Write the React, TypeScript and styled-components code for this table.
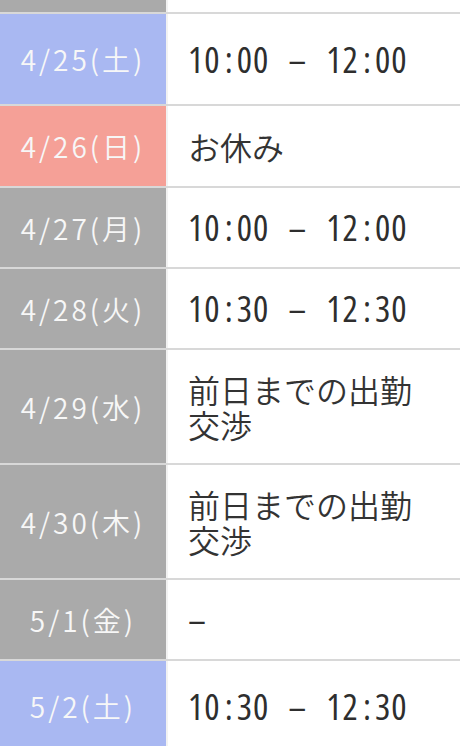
import styled, { createGlobalStyle } from 'styled-components';

const GlobalStyle = createGlobalStyle`
  html, body {
    margin: 0;
    padding: 0;
    background: #ffffff;
  }
  body {
    font-family: "Noto Sans CJK JP", "Noto Sans", sans-serif;
  }
`;

type Kind = 'weekday' | 'sat' | 'sun';

const dayColors: Record<Kind, string> = {
  weekday: '#aaaaaa',
  sat: '#a9b8f2',
  sun: '#f5a097',
};

const Schedule = styled.div`
  display: flex;
  flex-direction: column;
  width: 460px;
  height: 746px;
  overflow: hidden;
`;

const Row = styled.div<{ $h: number }>`
  display: grid;
  grid-template-columns: 168px 1fr;
  min-height: ${(p) => p.$h}px;
  border-top: 2px solid #d8d8d8;
  &:first-child {
    border-top: none;
  }
`;

const DayCell = styled.div<{ $kind: Kind }>`
  display: flex;
  align-items: center;
  justify-content: center;
  background: ${(p) => dayColors[p.$kind]};
  border-right: 2px solid #f2f2f2;
  color: #f7f7f7;
  font-size: 28px;
  font-weight: 350;
  letter-spacing: 3px;
  white-space: nowrap;
`;

const InfoCell = styled.div`
  display: flex;
  align-items: center;
  padding: 0 20px;
  color: #333333;
  font-size: 32px;
  font-weight: 350;
  line-height: 35px;
`;

const Time = styled.span`
  display: inline-flex;
  align-items: center;
  font-family: "Open Sans", "Noto Sans CJK JP", sans-serif;
  font-stretch: 75%;
  font-size: 36px;
  font-weight: 400;
  letter-spacing: 1px;
  color: #2e2e2e;
  white-space: pre;
`;

const Colon = styled.span`
  margin: 0 3px 0 4px;
`;

const Dash = styled.span<{ $spaced?: boolean }>`
  margin: 0 ${(p) => (p.$spaced ? '19px' : '0')};
`;

function Clock({ value }: { value: string }) {
  const [h, m] = value.split(':');
  return (
    <span>
      {h}
      <Colon>:</Colon>
      {m}
    </span>
  );
}

interface Item {
  day: string;
  kind: Kind;
  info?: string;
  from?: string;
  to?: string;
  none?: boolean;
  h: number;
}

const items: Item[] = [
  { day: '', kind: 'weekday', h: 12 },
  { day: '4/25(土)', kind: 'sat', from: '10:00', to: '12:00', h: 90 },
  { day: '4/26(日)', kind: 'sun', info: 'お休み', h: 80 },
  { day: '4/27(月)', kind: 'weekday', from: '10:00', to: '12:00', h: 79 },
  { day: '4/28(火)', kind: 'weekday', from: '10:30', to: '12:30', h: 79 },
  { day: '4/29(水)', kind: 'weekday', info: '前日までの出勤交渉', h: 113 },
  { day: '4/30(木)', kind: 'weekday', info: '前日までの出勤交渉', h: 113 },
  { day: '5/1(金)', kind: 'weekday', none: true, h: 79 },
  { day: '5/2(土)', kind: 'sat', from: '10:30', to: '12:30', h: 90 },
];

function Info({ it }: { it: Item }) {
  if (it.from && it.to) {
    return (
      <Time>
        <Clock value={it.from} />
        <Dash $spaced>–</Dash>
        <Clock value={it.to} />
      </Time>
    );
  }
  if (it.none) {
    return (
      <Time>
        <Dash>–</Dash>
      </Time>
    );
  }
  return <>{it.info}</>;
}

export default function App() {
  return (
    <>
      <GlobalStyle />
      <Schedule>
        {items.map((it, i) => (
          <Row key={i} $h={it.h}>
            <DayCell $kind={it.kind}>{it.day}</DayCell>
            <InfoCell>
              <Info it={it} />
            </InfoCell>
          </Row>
        ))}
      </Schedule>
    </>
  );
}
